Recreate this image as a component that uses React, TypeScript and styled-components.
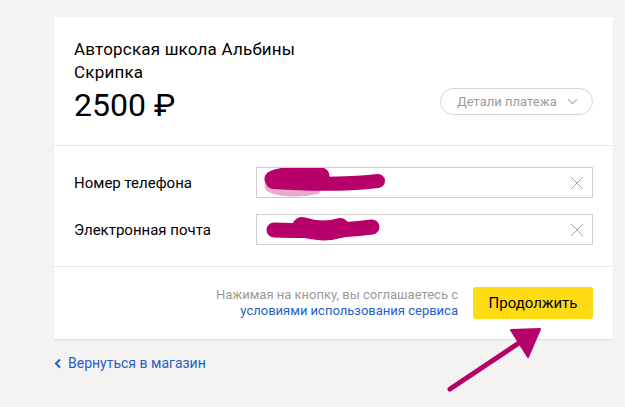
import React from 'react'
import styled, { createGlobalStyle } from 'styled-components'

const GlobalStyle = createGlobalStyle`
  html, body {
    margin: 0;
    padding: 0;
    background: #f4f3f1;
    font-family: Roboto, "Noto Sans", Arial, sans-serif;
    color: #000;
  }
`

const Page = styled.div`
  position: relative;
  width: 625px;
  height: 407px;
  overflow: hidden;
  padding: 17px 0 0 54px;
  box-sizing: border-box;
`

const Card = styled.div`
  width: 559px;
  background: #fff;
  box-shadow: 0 1px 1px rgba(0, 0, 0, 0.08);
`

const Section = styled.div<{ $pt: number; $pb: number }>`
  padding: ${p => p.$pt}px 20px ${p => p.$pb}px 20px;
  & + & {
    border-top: 1px solid #e8e8e8;
  }
`

const Header = styled.div`
  display: flex;
  justify-content: space-between;
  align-items: flex-end;
`

const Title = styled.div`
  font-size: 17px;
  line-height: 23px;
  letter-spacing: 0.2px;
`

const Price = styled.div`
  font-size: 32px;
  line-height: 36px;
  margin-top: 3px;
`

const DetailsButton = styled.button`
  display: flex;
  align-items: center;
  gap: 10px;
  height: 27px;
  width: 153px;
  box-sizing: border-box;
  padding: 0 0 0 16px;
  margin-bottom: 8px;
  border: 1px solid #d6d6d6;
  border-radius: 14px;
  background: #fff;
  color: #9c9c9c;
  font-family: inherit;
  font-size: 13px;
`

const Row = styled.div`
  display: flex;
  align-items: center;
  & + & {
    margin-top: 16px;
  }
`

const Label = styled.div`
  width: 182px;
  font-size: 15px;
`

const Field = styled.div`
  position: relative;
  flex: 1;
  height: 31px;
  border: 1px solid #cfcfcf;
  box-sizing: border-box;
`

const Scribble = styled.svg`
  position: absolute;
  left: 0;
  top: 0;
`

const Clear = styled.svg`
  position: absolute;
  right: 8px;
  top: 8px;
`

const Footer = styled.div`
  display: flex;
  justify-content: flex-end;
  align-items: center;
  gap: 15px;
`

const Terms = styled.div`
  text-align: right;
  font-size: 13px;
  line-height: 16px;
  color: #9a9a9a;
  a {
    color: #2461c6;
    text-decoration: none;
  }
`

const PrimaryButton = styled.button`
  width: 120px;
  height: 32px;
  border: none;
  border-radius: 3px;
  background: #ffdb14;
  color: #000;
  font-family: inherit;
  font-size: 15px;
`

const BackLink = styled.a`
  display: flex;
  align-items: center;
  gap: 6px;
  margin-top: 16px;
  font-size: 14px;
  color: #2461c6;
  text-decoration: none;
`

const Arrow = styled.svg`
  position: absolute;
  left: 440px;
  top: 320px;
`

const Chevron = ({ size = 10, color = '#aaa' }) => (
  <svg width={size} height={size * 0.6} viewBox="0 0 10 6">
    <path d="M1 1l4 4 4-4" fill="none" stroke={color} strokeWidth="1" />
  </svg>
)

const ClearIcon = () => (
  <Clear width="14" height="14" viewBox="0 0 14 14">
    <path d="M1 1l12 12M13 1L1 13" stroke="#a8a8a8" strokeWidth="1" />
  </Clear>
)

export default function App() {
  return (
    <>
      <GlobalStyle />
      <Page>
        <Card>
          <Section $pt={21} $pb={22}>
            <Header>
              <div>
                <Title>Авторская школа Альбины</Title>
                <Title>Скрипка</Title>
                <Price>2500 ₽</Price>
              </div>
              <DetailsButton>
                Детали платежа
                <Chevron size={11} />
              </DetailsButton>
            </Header>
          </Section>
          <Section $pt={21} $pb={21}>
            <Row>
              <Label>Номер телефона</Label>
              <Field>
                <Scribble width="140" height="30" viewBox="0 0 140 30">
                  <path d="M14 18c10 5 30 5 44 2" stroke="#eaa9cf" strokeWidth="13" strokeLinecap="round" fill="none" />
                  <path d="M16 11c12-5 36-4 48-3" stroke="#b8006b" strokeWidth="17" strokeLinecap="round" fill="none" />
                  <path d="M16 14c30 2 70 3 105 -1" stroke="#b8006b" strokeWidth="14" strokeLinecap="round" fill="none" />
                </Scribble>
                <ClearIcon />
              </Field>
            </Row>
            <Row>
              <Label>Электронная почта</Label>
              <Field>
                <Scribble width="140" height="30" viewBox="0 0 140 30">
                  <path d="M17 15c30 1 70 1 98 -3" stroke="#b8006b" strokeWidth="15" strokeLinecap="round" fill="none" />
                  <path d="M45 12c10 3 25 5 38 1" stroke="#b8006b" strokeWidth="20" strokeLinecap="round" fill="none" />
                </Scribble>
                <ClearIcon />
              </Field>
            </Row>
          </Section>
          <Section $pt={20} $pb={20}>
            <Footer>
              <Terms>
                Нажимая на кнопку, вы соглашаетесь с<br />
                <a href="#">условиями использования сервиса</a>
              </Terms>
              <PrimaryButton>Продолжить</PrimaryButton>
            </Footer>
          </Section>
        </Card>
        <BackLink href="#">
          <svg width="8" height="11" viewBox="0 0 8 11">
            <path d="M6 1.5L2 5.5l4 4" fill="none" stroke="#2461c6" strokeWidth="2" />
          </svg>
          Вернуться в магазин
        </BackLink>
        <Arrow width="110" height="80" viewBox="0 0 110 80">
          <path d="M10 69L82 21" stroke="#b8006b" strokeWidth="5" strokeLinecap="round" />
          <path d="M71 10L100 9L88 37Z" fill="#b8006b" stroke="#b8006b" strokeWidth="2" strokeLinejoin="round" />
        </Arrow>
      </Page>
    </>
  )
}
